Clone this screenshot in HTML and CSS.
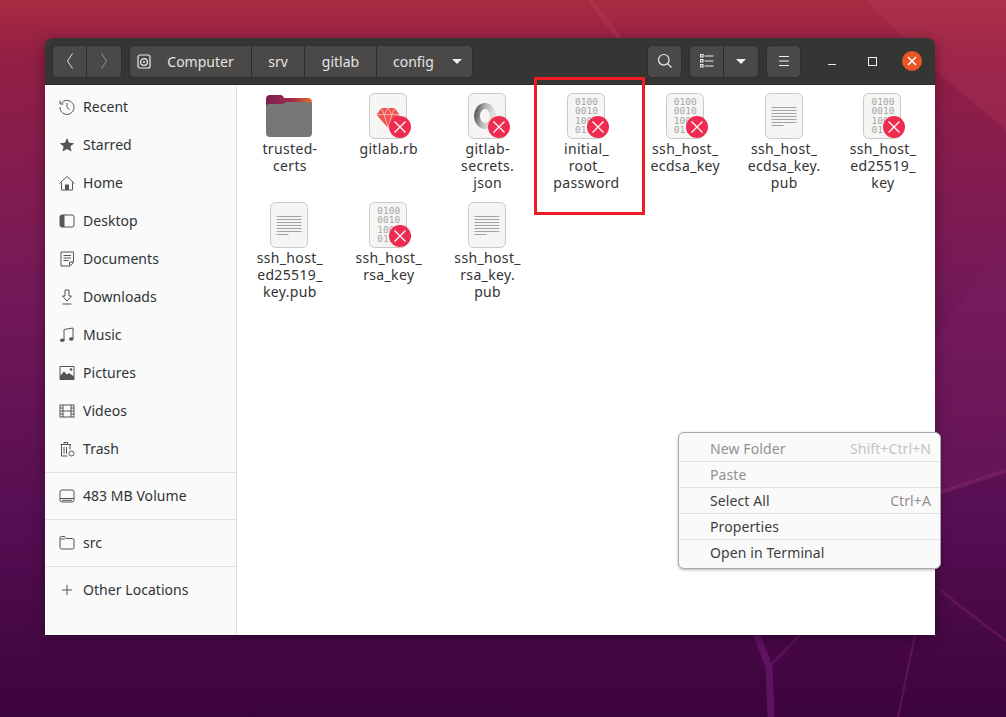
FILE: index.html
```html
<!DOCTYPE html>
<html lang="en">

<head>
    <meta charset="UTF-8">
    <meta name="viewport" content="width=device-width, initial-scale=1.0">
    <title>config - Files</title>
    <link rel="stylesheet" href="styles.css">
</head>

<body>
    <!-- wallpaper -->
    <svg class="wallpaper" viewBox="0 0 1006 717" preserveAspectRatio="none">
        <defs>
            <linearGradient id="wall" x1="0.5" y1="0" x2="0.5" y2="1">
                <stop offset="0" stop-color="#a92b42" />
                <stop offset="0.08" stop-color="#931f45" />
                <stop offset="0.4" stop-color="#741958" />
                <stop offset="0.72" stop-color="#560e52" />
                <stop offset="1" stop-color="#3c043e" />
            </linearGradient>
        </defs>
        <rect width="1006" height="717" fill="url(#wall)" />
        <polygon points="866,0 1006,0 1006,130 935,70" fill="#bb3a58" opacity="0.3" />
        <polygon points="978,279 1006,244 1006,471 935,494 935,340" fill="#7e2064" opacity="0.3" />
        <path d="M590 0 L632 55" stroke="#b8405c" stroke-width="5" opacity="0.35" fill="none" />
        <path d="M1006 471 L935 494" stroke="#8a2a6c" stroke-width="4" opacity="0.45" fill="none" />
        <path d="M941 590 L956 603 L1006 641" stroke="#7a2068" stroke-width="3" opacity="0.45" fill="none" />
        <path d="M757 635 L769 667 L771 717" stroke="#5f1260" stroke-width="7" fill="none" />
        <path d="M769 667 L800 635" stroke="#5f1260" stroke-width="2" fill="none" />
        <path d="M915 635 L898 717" stroke="#5f1260" stroke-width="2" fill="none" />
    </svg>

    <!-- shared icons -->
    <svg class="defs" aria-hidden="true">
        <symbol id="badge" viewBox="0 0 22 22">
            <circle cx="11" cy="11" r="11" fill="#ef2b50" />
            <path d="M5.5 5.5 L16.5 16.5 M16.5 5.5 L5.5 16.5" stroke="#fff" stroke-width="1.3" />
        </symbol>
        <symbol id="sheet" viewBox="0 0 38 46">
            <rect x="0.5" y="0.5" width="37" height="45" rx="5" fill="#f5f5f4" stroke="#c9c9c7" />
        </symbol>
        <symbol id="textfile" viewBox="0 0 38 46">
            <rect x="0.5" y="0.5" width="37" height="45" rx="5" fill="#f5f5f4" stroke="#c9c9c7" />
            <path d="M6.5 14.5h25M6.5 17.5h25M6.5 20.5h25M6.5 23.5h25M6.5 26.5h25M6.5 29.5h25M6.5 32.5h12" stroke="#a3a3a3" stroke-width="1" />
        </symbol>
    </svg>

    <div class="window">
        <header class="headerbar">
            <div class="btn-group">
                <button class="hbtn nav-btn"><svg width="16" height="16" viewBox="0 0 16 16"><path d="M10.5 .5 L5.500 8 L10.500 15.500" class="stroke" /></svg></button>
                <button class="hbtn nav-btn dim"><svg width="16" height="16" viewBox="0 0 16 16"><path d="M5.500 .5 L10.500 8 L5.500 15.500" class="stroke" /></svg></button>
            </div>
            <div class="btn-group pathbar">
                <button class="hbtn crumb crumb-root">
                    <svg width="14" height="15" viewBox="0 0 14 15"><rect x="1" y="1" width="12" height="13" rx="2" class="stroke" /><circle cx="7" cy="8" r="3.4" class="stroke" /><circle cx="7" cy="8" r="1" fill="#eee" /></svg>
                    Computer
                </button>
                <button class="hbtn crumb crumb-srv">srv</button>
                <button class="hbtn crumb crumb-gitlab">gitlab</button>
                <button class="hbtn crumb crumb-config">config <span class="caret"></span></button>
            </div>
            <button class="hbtn icon-btn search-btn"><svg width="16" height="16" viewBox="0 0 16 16"><circle cx="6.800" cy="6.800" r="5.300" class="stroke" /><path d="M10.800 10.800 L14.500 14.500" class="stroke" stroke-width="1.600" /></svg></button>
            <div class="btn-group view-group">
                <button class="hbtn icon-btn"><svg width="14" height="14" viewBox="0 0 14 14"><path d="M4.500 2h9M4.500 7h9M4.500 12h9" class="stroke" /><path d="M.5.5h2.500v2.500h-2.500zM.5 5.500h2.500v2.500h-2.500zM.5 10.500h2.500v2.500h-2.500z" class="stroke" stroke-width="1" /></svg></button>
                <button class="hbtn icon-btn"><span class="caret"></span></button>
            </div>
            <button class="hbtn icon-btn"><svg width="14" height="14" viewBox="0 0 14 14"><path d="M2 2.500h10M2 7h10M2 11.500h10" class="stroke" /></svg></button>
            <div class="win-controls">
                <span class="win-min"></span>
                <span class="win-max"></span>
                <span class="win-close"><svg width="10" height="10" viewBox="0 0 10 10"><path d="M1 1 L9 9 M9 1 L1 9" stroke="#fff" stroke-width="1.600" /></svg></span>
            </div>
        </header>

        <div class="main">
            <nav class="sidebar">
                <div class="side-row"><svg class="side-icon" viewBox="0 0 16 16"><path d="M2.200 4.500A7 7 0 1 1 1 8" class="s" /><path d="M1 1.500v3.500h3.500" class="s" /><path d="M8 4v4.500l2.500 2" class="s" /></svg>Recent</div>
                <div class="side-row"><svg class="side-icon" viewBox="0 0 16 16"><path d="M8 1l2.100 4.700 5.100.5-3.800 3.400 1.100 5L8 12l-4.500 2.600 1.100-5L.8 6.200l5.100-.5z" fill="#555" /></svg>Starred</div>
                <div class="side-row"><svg class="side-icon" viewBox="0 0 16 16"><path d="M.5 8.500L8 1.500l7.500 7" class="s" /><path d="M2.500 7.500v7.500h11V7.500" class="s" /><rect x="6" y="9.500" width="4" height="5.500" fill="#555" /></svg>Home</div>
                <div class="side-row"><svg class="side-icon" viewBox="0 0 16 16"><rect x="1" y="2" width="14" height="12" rx="2" class="s" /><path d="M3 2h2.500v12H3a2 2 0 0 1-2-2V4a2 2 0 0 1 2-2z" fill="#555" /></svg>Desktop</div>
                <div class="side-row"><svg class="side-icon" viewBox="0 0 16 16"><path d="M2 1h12.500v10.500L11 15H2z" class="s" /><path d="M4.500 4.500h7.500M4.500 7h7.500M4.500 9.500h5" class="s" /><path d="M10.500 14.500v-3.500h4" class="s" /></svg>Documents</div>
                <div class="side-row"><svg class="side-icon" viewBox="0 0 16 16"><path d="M6 1h4v6h2.500L8 12 3.500 7H6z" class="s" /><path d="M3.500 15h9" class="s" /></svg>Downloads</div>
                <div class="side-row"><svg class="side-icon" viewBox="0 0 16 16"><path d="M5 13V2.500L14 1v10.500" class="s" stroke-width="1.500" /><ellipse cx="3.300" cy="13.300" rx="2.300" ry="1.800" fill="#555" /><ellipse cx="12.300" cy="12" rx="2.300" ry="1.800" fill="#555" /></svg>Music</div>
                <div class="side-row"><svg class="side-icon" viewBox="0 0 16 16"><path d="M1 1.500h14v13H1z" class="s" /><path d="M1 14.500V11l4-4.500 3 3 2-1.500 5 3.500v3z" fill="#555" /><circle cx="12" cy="4.500" r="1.300" fill="#555" /></svg>Pictures</div>
                <div class="side-row"><svg class="side-icon" viewBox="0 0 16 16"><rect x="1" y="2" width="14" height="12" class="s" /><path d="M4 2v12M12 2v12M4 8h8M1 5h3M1 8h3M1 11h3M12 5h3M12 8h3M12 11h3" class="s" /></svg>Videos</div>
                <div class="side-row"><svg class="side-icon" viewBox="0 0 16 16"><path d="M1.500 3.500h10.500M5 3.500V1.500h3.500v2M2.500 3.500v11.500h6M11 3.500v5M5 6v6.500M7.500 6v6.500" class="s" /><circle cx="12.500" cy="12.500" r="2.500" class="s" /></svg>Trash</div>
                <div class="side-sep"></div>
                <div class="side-row"><svg class="side-icon" viewBox="0 0 16 16"><rect x="1" y="2" width="14" height="12" rx="2" class="s" /><path d="M1 10.500h14M3 12.300h10" class="s" /></svg>483 MB Volume</div>
                <div class="side-sep"></div>
                <div class="side-row"><svg class="side-icon" viewBox="0 0 16 16"><path d="M1 4V3a1.500 1.500 0 0 1 1.500-1.500h3L7 3.500h6.500A1.500 1.500 0 0 1 15 5v7.500a1.500 1.500 0 0 1-1.500 1.500h-11A1.500 1.500 0 0 1 1 12.500z" class="s" /><path d="M1 4h5" class="s" /></svg>src</div>
                <div class="side-sep"></div>
                <div class="side-row"><svg class="side-icon" viewBox="0 0 16 16"><path d="M8 3v10M3 8h10" class="s" /></svg>Other Locations</div>
            </nav>

            <section class="files">
                <div class="file">
                    <div class="file-icon">
                        <svg class="folder" viewBox="0 0 46 42">
                            <defs>
                                <linearGradient id="tab" x1="0" y1="0" x2="1" y2="0">
                                    <stop offset="0" stop-color="#7d1f52" />
                                    <stop offset="0.6" stop-color="#a32c46" />
                                    <stop offset="1" stop-color="#e8702a" />
                                </linearGradient>
                            </defs>
                            <path d="M0 4a4 4 0 0 1 4-4h10a4 4 0 0 1 4 3h24a4 4 0 0 1 4 4v10H0z" fill="url(#tab)" />
                            <path d="M0 12a3 3 0 0 1 3-3h14l3-2h23a3 3 0 0 1 3 3v28a4 4 0 0 1-4 4H4a4 4 0 0 1-4-4z" fill="#767676" />
                        </svg>
                    </div>
                    <div class="file-name">trusted-<br>certs</div>
                </div>
                <div class="file">
                    <div class="file-icon">
                        <svg class="sheet"><use href="#sheet" /></svg>
                        <svg class="gem" viewBox="0 0 24 22"><path d="M5 1h14l5 7-12 14L0 8z" fill="#ef5350" /><path d="M0 8h24M5 1l3 7 4 14 4-14 3-7M8 8l4-7 4 7" stroke="#fbd0cf" stroke-width="0.8" fill="none" /></svg>
                        <svg class="badge"><use href="#badge" /></svg>
                    </div>
                    <div class="file-name">gitlab.rb</div>
                </div>
                <div class="file">
                    <div class="file-icon">
                        <svg class="sheet"><use href="#sheet" /></svg>
                        <svg class="ring" viewBox="0 0 22 26">
                            <defs>
                                <linearGradient id="ringfill" x1="0" y1="0" x2="1" y2="0.3">
                                    <stop offset="0" stop-color="#5c5c5c" />
                                    <stop offset="0.5" stop-color="#b5b5b5" />
                                    <stop offset="1" stop-color="#dedede" />
                                </linearGradient>
                            </defs>
                            <ellipse cx="11" cy="13" rx="8" ry="10" fill="none" stroke="url(#ringfill)" stroke-width="6" />
                        </svg>
                        <svg class="badge"><use href="#badge" /></svg>
                    </div>
                    <div class="file-name">gitlab-<br>secrets.<br>json</div>
                </div>
                <div class="file">
                    <div class="file-icon">
                        <svg class="sheet"><use href="#sheet" /></svg>
                        <div class="bits">0100<br>0010<br>1000<br>0110</div>
                        <svg class="badge"><use href="#badge" /></svg>
                    </div>
                    <div class="file-name">initial_<br>root_<br>password</div>
                </div>
                <div class="file">
                    <div class="file-icon">
                        <svg class="sheet"><use href="#sheet" /></svg>
                        <div class="bits">0100<br>0010<br>1000<br>0110</div>
                        <svg class="badge"><use href="#badge" /></svg>
                    </div>
                    <div class="file-name">ssh_host_<br>ecdsa_key</div>
                </div>
                <div class="file">
                    <div class="file-icon">
                        <svg class="sheet"><use href="#textfile" /></svg>
                    </div>
                    <div class="file-name">ssh_host_<br>ecdsa_key.<br>pub</div>
                </div>
                <div class="file">
                    <div class="file-icon">
                        <svg class="sheet"><use href="#sheet" /></svg>
                        <div class="bits">0100<br>0010<br>1000<br>0110</div>
                        <svg class="badge"><use href="#badge" /></svg>
                    </div>
                    <div class="file-name">ssh_host_<br>ed25519_<br>key</div>
                </div>
                <div class="file">
                    <div class="file-icon">
                        <svg class="sheet"><use href="#textfile" /></svg>
                    </div>
                    <div class="file-name">ssh_host_<br>ed25519_<br>key.pub</div>
                </div>
                <div class="file">
                    <div class="file-icon">
                        <svg class="sheet"><use href="#sheet" /></svg>
                        <div class="bits">0100<br>0010<br>1000<br>0110</div>
                        <svg class="badge"><use href="#badge" /></svg>
                    </div>
                    <div class="file-name">ssh_host_<br>rsa_key</div>
                </div>
                <div class="file">
                    <div class="file-icon">
                        <svg class="sheet"><use href="#textfile" /></svg>
                    </div>
                    <div class="file-name">ssh_host_<br>rsa_key.<br>pub</div>
                </div>
            </section>
        </div>
    </div>

    <!-- red annotation box -->
    <div class="callout"></div>

    <div class="context-menu">
        <div class="menu-item disabled"><span>New Folder</span><span class="shortcut">Shift+Ctrl+N</span></div>
        <div class="menu-item disabled"><span>Paste</span></div>
        <div class="menu-item"><span>Select All</span><span class="shortcut">Ctrl+A</span></div>
        <div class="menu-item"><span>Properties</span></div>
        <div class="menu-item"><span>Open in Terminal</span></div>
    </div>
</body>

</html>
```

FILE: styles.css
```css
html,
body {
    height: 100%;
}

body {
    margin: 0;
    overflow: hidden;
    position: relative;
    background-color: #560e52;
    font-family: 'Noto Sans', sans-serif;
    font-size: 14px;
    color: #333;
}

.wallpaper {
    position: absolute;
    top: 0;
    left: 0;
    width: 1006px;
    height: 717px;
}

.defs {
    position: absolute;
    width: 0;
    height: 0;
}

.window {
    position: absolute;
    top: 38px;
    left: 45px;
    width: 890px;
    height: 597px;
    display: flex;
    flex-direction: column;
    border-radius: 8px 8px 0 0;
    overflow: hidden;
    box-shadow: 0 3px 14px rgba(0, 0, 0, 0.35);
}

/* header */
.headerbar {
    height: 47px;
    flex: none;
    box-sizing: border-box;
    display: flex;
    align-items: center;
    padding: 0 13px 0 7px;
    background-color: #353533;
    border-bottom: 1px solid #2a2a28;
    color: #e8e8e8;
}

.btn-group {
    display: flex;
}

.hbtn {
    height: 33px;
    box-sizing: border-box;
    display: flex;
    align-items: center;
    justify-content: center;
    padding: 0;
    border: 1px solid #2e2e2c;
    border-left-width: 0;
    background-color: #4a4947;
    color: #e4e4e4;
    font-family: inherit;
    font-size: 14px;
}

.btn-group .hbtn:first-child,
.headerbar > .hbtn {
    border-left-width: 1px;
    border-radius: 5px 0 0 5px;
}

.btn-group .hbtn:last-child {
    border-radius: 0 5px 5px 0;
}

.headerbar > .hbtn {
    border-radius: 5px;
}

.stroke {
    fill: none;
    stroke: #eee;
    stroke-width: 1.2;
}

.nav-btn {
    width: 35px;
}

.nav-btn .stroke {
    stroke: #ddd;
    stroke-width: 1;
}

.nav-btn.dim .stroke {
    stroke: #8f8f8f;
}

.pathbar {
    margin-left: 7px;
}

.crumb-root {
    width: 123px;
    gap: 16px;
    padding-right: 10px;
}

.crumb-srv {
    width: 53px;
}

.crumb-gitlab {
    width: 72px;
}

.crumb-config {
    width: 96px;
    justify-content: flex-start;
    padding-left: 16px;
    gap: 18px;
}

.caret {
    width: 0;
    height: 0;
    border-left: 5px solid transparent;
    border-right: 5px solid transparent;
    border-top: 5px solid #eee;
}

.icon-btn {
    width: 35px;
}

.search-btn {
    margin-left: 174px;
}

.view-group {
    margin-left: 7px;
    margin-right: 7px;
}

.win-controls {
    margin-left: auto;
    display: flex;
    align-items: center;
}

.win-min {
    width: 8px;
    height: 1px;
    margin-top: 6px;
    margin-right: 32px;
    background-color: #eee;
}

.win-max {
    width: 7px;
    height: 7px;
    margin-right: 25px;
    border: 1px solid #eee;
}

.win-close {
    width: 20px;
    height: 20px;
    border-radius: 50%;
    background-color: #e95420;
    display: flex;
    align-items: center;
    justify-content: center;
}

/* body of the window */
.main {
    flex: 1;
    display: flex;
    min-height: 0;
    background-color: #fff;
}

.sidebar {
    width: 192px;
    flex: none;
    box-sizing: border-box;
    padding-top: 3px;
    background-color: #fafafa;
    border-right: 1px solid #dedede;
    color: #2e3436;
    letter-spacing: 0.05px;
}

.side-row {
    height: 38px;
    box-sizing: border-box;
    display: flex;
    align-items: center;
    gap: 8px;
    padding: 0 0 2px 14px;
}

.side-icon {
    width: 16px;
    height: 16px;
    flex: none;
    margin-top: 2px;
}

.s {
    fill: none;
    stroke: #555;
    stroke-width: 1;
}

.side-sep {
    height: 1px;
    margin: 4px 0;
    background-color: #e2e2e2;
}

.files {
    flex: 1;
    display: grid;
    grid-template-columns: repeat(7, 98.85px);
    grid-auto-rows: 109px;
    padding: 7px 0 0 3px;
}

.file {
    display: flex;
    flex-direction: column;
    align-items: center;
}

.file-icon {
    position: relative;
    width: 48px;
    height: 48px;
    display: flex;
    justify-content: center;
    align-items: center;
}

.sheet {
    width: 38px;
    height: 46px;
}

.folder {
    width: 46px;
    height: 42px;
}

.gem {
    position: absolute;
    top: 15px;
    left: 12px;
    width: 24px;
    height: 21px;
}

.ring {
    position: absolute;
    top: 11px;
    left: 11px;
    width: 22px;
    height: 26px;
}

.bits {
    position: absolute;
    top: 5px;
    left: 13px;
    font-family: 'DejaVu Sans Mono', monospace;
    font-size: 9.5px;
    line-height: 9.3px;
    letter-spacing: 0.05px;
    color: #a6a6a6;
}

.badge {
    position: absolute;
    top: 24px;
    left: 25px;
    width: 22px;
    height: 22px;
}

.file-name {
    padding-left: 1px;
    line-height: 17px;
    text-align: center;
    color: #333;
    letter-spacing: 0.35px;
}

/* red box round one file */
.callout {
    position: absolute;
    top: 77px;
    left: 534px;
    width: 105px;
    height: 132px;
    border: 3px solid #ee1c25;
}

.context-menu {
    position: absolute;
    top: 432px;
    left: 678px;
    width: 263px;
    box-sizing: border-box;
    padding: 3px 0 2px;
    background-color: #fafafa;
    border: 1px solid #a9a9a9;
    border-radius: 6px;
    box-shadow: 0 1px 3px rgba(0, 0, 0, 0.3);
    letter-spacing: 0.1px;
}

.menu-item {
    height: 26px;
    box-sizing: border-box;
    display: flex;
    align-items: center;
    justify-content: space-between;
    padding: 0 9px 0 31px;
    border-bottom: 1px solid #e2e2e2;
    color: #3d3d3d;
}

.menu-item:last-child {
    border-bottom-color: transparent;
}

.shortcut {
    color: #8f8f8f;
}

.menu-item.disabled {
    color: #929292;
}

.menu-item.disabled .shortcut {
    color: #c4c4c4;
}
```
